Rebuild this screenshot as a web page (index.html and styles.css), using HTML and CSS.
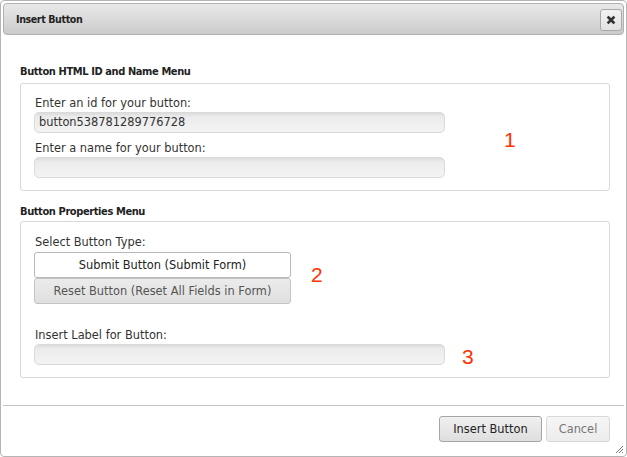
FILE: index.html
```html
<!DOCTYPE html>
<html>
<head>
<meta charset="utf-8">
<link rel="stylesheet" href="styles.css">
</head>
<body>
<div class="dialog">
  <div class="titlebar">
    <span class="title">Insert Button</span>
    <button class="close" aria-label="close">
      <svg width="10" height="10" viewBox="0 0 10 10"><path d="M2.5 2.5 L7.5 7.5 M7.5 2.5 L2.5 7.5" stroke="#333" stroke-width="2.6" stroke-linecap="square"/></svg>
    </button>
  </div>
  <div class="content">
    <div class="heading h1">Button HTML ID and Name Menu</div>
    <div class="box box1">
      <div class="label">Enter an id for your button:</div>
      <div class="input">button538781289776728</div>
      <div class="label second">Enter a name for your button:</div>
      <div class="input"></div>
      <span class="mark m1">1</span>
    </div>
    <div class="heading h2">Button Properties Menu</div>
    <div class="box box2">
      <div class="label">Select Button Type:</div>
      <div class="choice active">Submit Button (Submit Form)</div>
      <div class="choice">Reset Button (Reset All Fields in Form)</div>
      <div class="label third">Insert Label for Button:</div>
      <div class="input"></div>
      <span class="mark m2">2</span>
      <span class="mark m3">3</span>
    </div>
  </div>
  <div class="footer">
    <button class="btn primary">Insert Button</button>
    <button class="btn cancel">Cancel</button>
    <svg class="grip" width="10" height="10" viewBox="0 0 10 10"><path d="M9 2 L2 9 M9 5 L5 9 M9 8 L8 9" stroke="#777" stroke-width="1"/></svg>
  </div>
</div>
</body>
</html>
```
FILE: styles.css
```css
html, body {
  margin: 0;
  padding: 0;
  background: #fff;
}
body {
  font-family: "DejaVu Sans", Verdana, sans-serif;
  font-size: 11.4px;
  color: #222;
}
.dialog {
  position: relative;
  width: 627px;
  height: 457px;
  box-sizing: border-box;
  border: 1px solid #b5b5b5;
  border-radius: 4px;
  padding: 2px;
  display: flex;
  flex-direction: column;
  background: #fff;
}
.titlebar {
  height: 32px;
  box-sizing: border-box;
  border: 1px solid #b0b0b0;
  border-radius: 4px;
  background: linear-gradient(#e9e9e9, #cbcbcb);
  display: flex;
  align-items: center;
  justify-content: space-between;
  padding: 0 1px 0 12px;
}
.title {
  font-family: "DejaVu Sans Condensed", "DejaVu Sans", sans-serif;
  font-weight: bold;
  font-size: 10.6px;
  letter-spacing: -0.4px;
  color: #222;
}
.close {
  width: 22px;
  height: 22px;
  box-sizing: border-box;
  border: 1px solid #a8a8a8;
  border-radius: 3px;
  background: linear-gradient(#f2f2f2, #e2e2e2);
  display: flex;
  align-items: center;
  justify-content: center;
  padding: 0;
  margin-top: 1px;
}
.close svg { display: block; }
.content {
  flex: 1;
  padding: 30px 0 0 17px;
}
.heading {
  font-family: "DejaVu Sans Condensed", "DejaVu Sans", sans-serif;
  font-weight: bold;
  font-size: 11px;
  letter-spacing: -0.4px;
  line-height: 14px;
  color: #222;
}
.h1 { margin-bottom: 4px; }
.h2 { margin-top: 14px; margin-bottom: 2px; }
.box {
  position: relative;
  width: 590px;
  box-sizing: border-box;
  border: 1px solid #d9d9d9;
  border-radius: 3px;
  padding: 12px 13px 12px 13px;
}
.box2 { padding-top: 13px; padding-bottom: 12px; }
.label {
  line-height: 14px;
  padding-left: 1px;
  color: #333;
}
.label.second { margin-top: 8px; }
.label.third { margin-top: 24px; }
.input {
  width: 411px;
  height: 21px;
  box-sizing: border-box;
  margin-top: 2px;
  border: 1px solid #dadada;
  border-radius: 5px;
  background: linear-gradient(#dcdcdc 0px, #ececec 4px, #f3f3f3 100%);
  padding: 0 4px;
  line-height: 19px;
  color: #333;
}
.choice {
  width: 257px;
  height: 26px;
  box-sizing: border-box;
  border: 1px solid #c4c4c4;
  border-radius: 3px;
  text-align: center;
  line-height: 24px;
  color: #555;
  background: linear-gradient(#ebebeb, #dfdfdf);
}
.choice.active {
  margin-top: 3px;
  background: #fff;
  border-color: #b8b8b8;
  color: #222;
}
.mark {
  position: absolute;
  font-family: "Liberation Sans", Arial, sans-serif;
  font-size: 21px;
  line-height: 21px;
  color: #ff3300;
}
.m1 { left: 483px; top: 45px; }
.m2 { left: 290px; top: 42px; }
.m3 { left: 441px; top: 124px; }
.footer {
  position: relative;
  height: 49px;
  box-sizing: border-box;
  border-top: 1px solid #c4c4c4;
  display: flex;
  justify-content: flex-end;
  align-items: flex-start;
  gap: 4px;
  padding: 10px 14px 0 0;
}
.btn {
  height: 26px;
  box-sizing: border-box;
  border-radius: 3px;
  font-family: "DejaVu Sans", Verdana, sans-serif;
  font-size: 11.4px;
  padding: 0;
}
.primary {
  width: 103px;
  border: 1px solid #a5a5a5;
  background: linear-gradient(#f0f0f0, #dedede);
  color: #222;
}
.cancel {
  width: 64px;
  border: 1px solid #d8d8d8;
  background: linear-gradient(#f6f6f6, #ececec);
  color: #777;
}
.grip {
  position: absolute;
  right: 0;
  bottom: 0;
}
```
